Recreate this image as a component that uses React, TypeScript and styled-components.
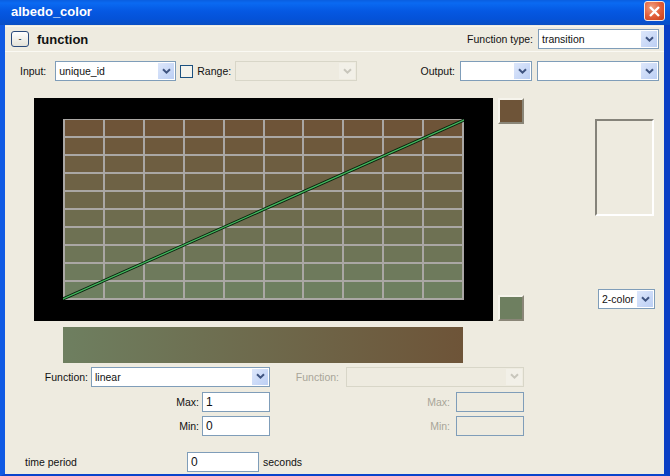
import React from "react";
import styled, {createGlobalStyle} from "styled-components";

const GlobalStyle = createGlobalStyle`
  html, body {
    margin: 0;
    padding: 0;
    background: #ece9d8;
  }
`

const Window = styled.div`
  width: 670px;
  height: 476px;
  display: flex;
  flex-direction: column;
  overflow: hidden;
  font-family: "Liberation Sans", Arial, sans-serif;
  font-size: 10.5px;
  color: #111;
`

const TitleBar = styled.div`
  height: 25px;
  flex: none;
  display: flex;
  align-items: center;
  justify-content: space-between;
  padding: 0 5px 3px 11px;
  box-sizing: border-box;
  background: linear-gradient(180deg, #0a5ee0 0%, #0a6af2 12%, #0558e2 45%, #0452d8 75%, #0a4fc4 100%);
`

const TitleText = styled.div`
  color: #fff;
  font-size: 13px;
  font-weight: bold;
`

const CloseButton = styled.div`
  width: 21px;
  height: 20px;
  box-sizing: border-box;
  border: 1px solid #f4e8e0;
  border-radius: 3px;
  background: radial-gradient(circle at 35% 30%, #f0a080 0%, #e2603c 50%, #c83c18 100%);
  display: flex;
  align-items: center;
  justify-content: center;
`

const Body = styled.div`
  flex: 1;
  display: flex;
  flex-direction: column;
  background: #eeebe0;
  border-left: 5px solid #0f5ae4;
  border-right: 6px solid #0a3ec4;
  border-bottom: 2px solid #0a44cc;
  padding-top: 1px;
`

const HeaderRow = styled.div`
  height: 26px;
  flex: none;
  box-sizing: border-box;
  display: flex;
  align-items: center;
  justify-content: space-between;
  padding: 0 5px 0 6px;
  border-top: 1px solid #f8f6ee;
  border-bottom: 1px solid #faf9f3;
`

const Group = styled.div<{$gap?: number}>`
  display: flex;
  align-items: center;
  gap: ${p => p.$gap ?? 5}px;
`

const Toggle = styled.div`
  width: 18px;
  height: 16px;
  box-sizing: border-box;
  border: 1px solid #2a4a7c;
  border-radius: 3px;
  background: linear-gradient(180deg, #fff, #e4e2d8);
  display: flex;
  align-items: center;
  justify-content: center;
  font-size: 9px;
  line-height: 9px;
`

const SectionTitle = styled.div`
  font-size: 13px;
  font-weight: bold;
  margin-left: 3px;
`

const Label = styled.span<{$off?: boolean}>`
  color: ${p => (p.$off ? "#a8a598" : "#111")};
  white-space: nowrap;
`

const InputLabel = styled(Label)`
  margin-right: 5px;
`

const InputRow = styled.div`
  height: 20px;
  flex: none;
  margin-top: 9px;
  padding: 0 5px 0 15px;
  display: flex;
  align-items: center;
  justify-content: space-between;
`

const SelectBox = styled.div<{$width: number; $off?: boolean}>`
  width: ${p => p.$width}px;
  height: 20px;
  flex: none;
  box-sizing: border-box;
  display: flex;
  align-items: center;
  justify-content: space-between;
  padding: 1px 1px 1px 3px;
  background: ${p => (p.$off ? "#eeebe0" : "#fff")};
  border: 1px solid ${p => (p.$off ? "#d8d6c8" : "#7f9db9")};
`

const SelectArrow = styled.div<{$off?: boolean}>`
  width: 16px;
  height: 16px;
  display: flex;
  align-items: center;
  justify-content: center;
  background: ${p => (p.$off ? "#f2f0e8" : "linear-gradient(135deg, #dde7fb, #bccff4)")};
`

const Checkbox = styled.div`
  width: 13px;
  height: 13px;
  box-sizing: border-box;
  border: 1px solid #1c5180;
  background: #f4f3ec;
`

const GraphRow = styled.div`
  display: flex;
  margin-top: 17px;
  padding-left: 29px;
`

const GraphFrame = styled.div`
  width: 459px;
  height: 223px;
  box-sizing: border-box;
  flex: none;
  background: #000;
  padding: 21px 0 0 29px;
`

const Plot = styled.div`
  position: relative;
  width: 401px;
  height: 181px;
`

const PlotGrid = styled.div`
  box-sizing: border-box;
  width: 100%;
  height: 100%;
  display: grid;
  grid-template-columns: repeat(10, 1fr);
  grid-template-rows: repeat(10, 1fr);
  gap: 2px;
  padding: 1px 2px 2px;
  background: #aaa7a4;
`

const PlotCell = styled.div<{$color: string}>`
  background: ${p => p.$color};
`

const PlotLine = styled.svg`
  position: absolute;
  left: 0;
  top: 0;
`

const SwatchColumn = styled.div`
  display: flex;
  flex-direction: column;
  justify-content: space-between;
  margin-left: 5px;
  height: 223px;
`

const Swatch = styled.div<{$color: string}>`
  width: 26px;
  height: 26px;
  box-sizing: border-box;
  background: ${p => p.$color};
  border: 2px solid;
  border-color: #f6f4ec #8a8678 #8a8678 #f6f4ec;
`

const SidePanel = styled.div`
  height: 223px;
  margin-left: 71px;
  display: flex;
  flex-direction: column;
  align-items: flex-start;
  padding-top: 21px;
  box-sizing: border-box;
`

const PreviewBox = styled.div`
  width: 59px;
  height: 97px;
  box-sizing: border-box;
  border: 2px solid;
  border-color: #85837a #fff #fff #85837a;
`

const SmallSelectSlot = styled.div`
  margin-top: 73px;
  margin-left: 3px;
`

const GradientBar = styled.div`
  width: 400px;
  height: 36px;
  flex: none;
  margin: 6px 0 0 58px;
  background: linear-gradient(90deg, #6e7f60 0%, #6e5438 100%);
`

const FormRow = styled.div`
  display: grid;
  grid-template-columns: 265px 254px;
  column-gap: 0;
`

const FunctionRow = styled(FormRow)`
  margin-top: 3px;
  height: 21px;
`

const MaxMinRow = styled(FormRow)<{$top: number}>`
  margin-top: ${p => p.$top}px;
  height: 20px;
`

const FieldGroup = styled.div<{$gap?: number}>`
  display: flex;
  align-items: center;
  justify-content: flex-end;
  gap: ${p => p.$gap ?? 3}px;
`

const TextBox = styled.div<{$width: number; $off?: boolean}>`
  width: ${p => p.$width}px;
  height: 20px;
  flex: none;
  box-sizing: border-box;
  border: 1px solid #7f9db9;
  background: ${p => (p.$off ? "#eeebe0" : "#fff")};
  padding: 0 3px;
  display: flex;
  align-items: center;
  font-size: 12px;
`

const TimeRow = styled.div`
  margin-top: 16px;
  padding-left: 20px;
  height: 20px;
  display: flex;
  align-items: center;
  gap: 4px;
`

const TimeLabel = styled.span`
  width: 158px;
`

const Chevron = ({off}: {off?: boolean}) => (
    <svg width="9" height="7" viewBox="0 0 9 7">
        <path d="M1 1.2 L4.5 4.7 L8 1.2" fill="none" stroke={off ? "#c8c6bc" : "#3f5480"} strokeWidth="2"/>
    </svg>
)

const Select = ({width, value, off}: {width: number, value?: string, off?: boolean}) => (
    <SelectBox $width={width} $off={off}>
        <span>{value}</span>
        <SelectArrow $off={off}><Chevron off={off}/></SelectArrow>
    </SelectBox>
)

// mix from the top colour to the bottom colour
const rowColor = (row: number) => {
    const t = row / 9
    const r = 110
    const g = Math.round(84 + (127 - 84) * t)
    const b = Math.round(56 + (96 - 56) * t)
    return `rgb(${r},${g},${b})`
}

const rows = Array.from({length: 10}, (_, i) => i)
const cols = Array.from({length: 10}, (_, i) => i)

export default function App() {
    return <Window>
        <GlobalStyle/>
        <TitleBar>
            <TitleText>albedo_color</TitleText>
            <CloseButton>
                <svg width="13" height="13" viewBox="0 0 13 13">
                    <path d="M2 2 L11 11 M11 2 L2 11" stroke="#fff" strokeWidth="2.4"/>
                </svg>
            </CloseButton>
        </TitleBar>
        <Body>
            <HeaderRow>
                <Group $gap={5}>
                    <Toggle>-</Toggle>
                    <SectionTitle>function</SectionTitle>
                </Group>
                <Group>
                    <Label>Function type:</Label>
                    <Select width={121} value="transition"/>
                </Group>
            </HeaderRow>
            <InputRow>
                <Group $gap={4}>
                    <InputLabel>Input:</InputLabel>
                    <Select width={121} value="unique_id"/>
                    <Checkbox/>
                    <Label>Range:</Label>
                    <Select width={122} off/>
                </Group>
                <Group $gap={5}>
                    <Label>Output:</Label>
                    <Select width={72}/>
                    <Select width={122}/>
                </Group>
            </InputRow>
            <GraphRow>
                <GraphFrame>
                    <Plot>
                        <PlotGrid>
                            {rows.map(r => cols.map(c => <PlotCell key={`${r}-${c}`} $color={rowColor(r)}/>))}
                        </PlotGrid>
                        <PlotLine width="401" height="181" viewBox="0 0 401 181">
                            <line x1="0" y1="180" x2="401" y2="1" stroke="#06240c" strokeWidth="3"/>
                            <line x1="0" y1="180" x2="401" y2="1" stroke="#46b860" strokeWidth="1.3"/>
                        </PlotLine>
                    </Plot>
                </GraphFrame>
                <SwatchColumn>
                    <Swatch $color="#6e5438"/>
                    <Swatch $color="#6e7f60"/>
                </SwatchColumn>
                <SidePanel>
                    <PreviewBox/>
                    <SmallSelectSlot>
                        <Select width={57} value="2-color"/>
                    </SmallSelectSlot>
                </SidePanel>
            </GraphRow>
            <GradientBar/>
            <FunctionRow>
                <FieldGroup>
                    <Label>Function:</Label>
                    <Select width={179} value="linear"/>
                </FieldGroup>
                <FieldGroup $gap={7}>
                    <Label $off>Function:</Label>
                    <Select width={178} off/>
                </FieldGroup>
            </FunctionRow>
            <MaxMinRow $top={5}>
                <FieldGroup>
                    <Label>Max:</Label>
                    <TextBox $width={68}>1</TextBox>
                </FieldGroup>
                <FieldGroup $gap={6}>
                    <Label $off>Max:</Label>
                    <TextBox $width={68} $off/>
                </FieldGroup>
            </MaxMinRow>
            <MaxMinRow $top={4}>
                <FieldGroup>
                    <Label>Min:</Label>
                    <TextBox $width={68}>0</TextBox>
                </FieldGroup>
                <FieldGroup $gap={6}>
                    <Label $off>Min:</Label>
                    <TextBox $width={68} $off/>
                </FieldGroup>
            </MaxMinRow>
            <TimeRow>
                <TimeLabel>time period</TimeLabel>
                <TextBox $width={72}>0</TextBox>
                <span>seconds</span>
            </TimeRow>
        </Body>
    </Window>
}
